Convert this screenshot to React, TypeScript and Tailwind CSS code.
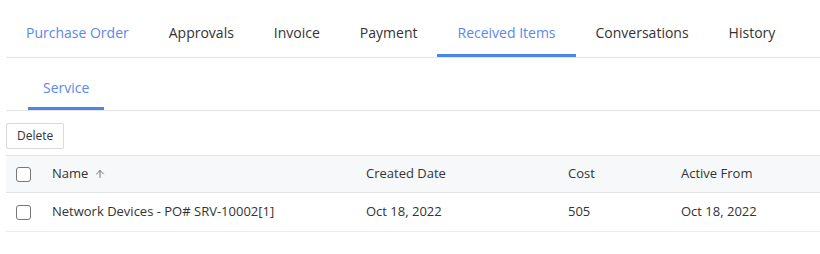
import { ArrowUp } from "lucide-react";

const tabs = ["Purchase Order", "Approvals", "Invoice", "Payment", "Received Items", "Conversations", "History"];

function Checkbox() {
  return <span className="block w-[15px] h-[15px] rounded-[3px] border border-[#767676] bg-white" />;
}

export default function App() {
  const active = "Received Items";
  return (
    <div className="w-[820px] h-[254px] bg-white text-[#333] text-[14px]" style={{ fontFamily: '"Open Sans", sans-serif' }}>
      {/* main tabs */}
      <div className="ml-[6px] flex border-b border-[#e5e5e5] h-[58px]">
        {tabs.map((t) => (
          <div
            key={t}
            className={`px-5 flex items-center pt-[10px] border-b-[3px] ${
              t === active ? "border-[#4a86e8] text-[#5b87f0]" : "border-transparent"
            } ${t === "Purchase Order" ? "text-[#5b87f0]" : ""}`}
          >
            {t}
          </div>
        ))}
      </div>

      {/* sub tabs */}
      <div className="ml-[6px] flex border-b border-[#e5e5e5] h-[53px]">
        <div className="ml-[22px] px-[15px] flex items-center pt-[10px] border-b-[3px] border-[#4a86e8] text-[#5b87f0]">
          Service
        </div>
      </div>

      <div className="px-[6px] pt-[12px]">
        <button className="h-[26px] px-[10px] text-[12px] border border-[#d9d9d9] rounded-[2px] bg-white text-[#333]">
          Delete
        </button>
      </div>

      <table className="ml-[6px] mt-[6px] w-[814px] text-[13px] border-collapse">
        <thead>
          <tr className="bg-[#f7f8fa] border-y border-[#e3e3e3] h-[37px]">
            <th className="w-[46px] pl-[10px] font-normal text-left"><Checkbox /></th>
            <th className="w-[314px] font-normal text-left">
              <span className="inline-flex items-center gap-[6px]">
                Name <ArrowUp size={12} strokeWidth={1.8} className="text-[#666]" />
              </span>
            </th>
            <th className="w-[202px] font-normal text-left">Created Date</th>
            <th className="w-[113px] font-normal text-left">Cost</th>
            <th className="font-normal text-left">Active From</th>
          </tr>
        </thead>
        <tbody>
          <tr className="border-b border-[#ebebeb] h-[39px]">
            <td className="pl-[10px]"><Checkbox /></td>
            <td>Network Devices - PO# SRV-10002[1]</td>
            <td>Oct 18, 2022</td>
            <td>505</td>
            <td>Oct 18, 2022</td>
          </tr>
        </tbody>
      </table>
    </div>
  );
}
